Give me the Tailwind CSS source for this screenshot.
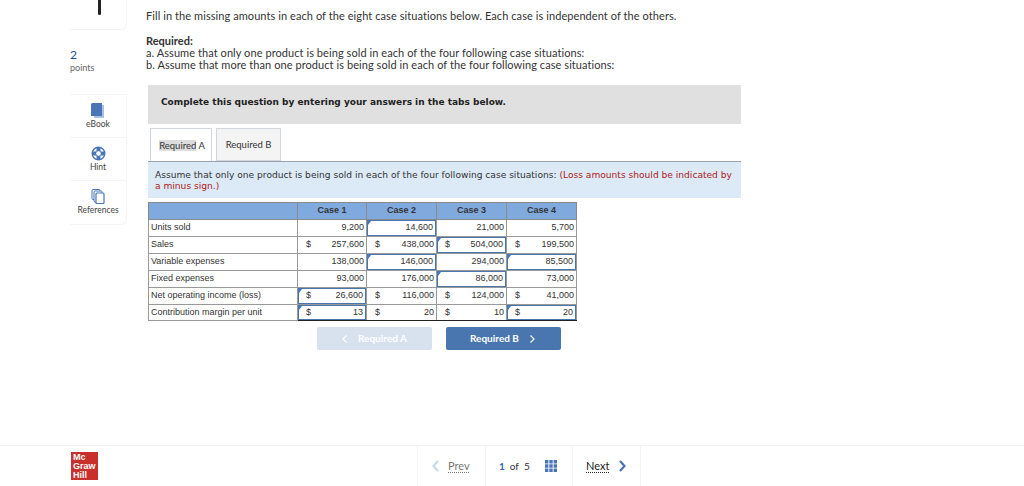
<!DOCTYPE html>
<html lang="en">
<head>
  <meta charset="UTF-8" />
  <title>Question 1 of 5</title>
  <script src="https://cdn.jsdelivr.net/npm/@tailwindcss/browser@4"></script>
</head>
<body class="bg-white overflow-hidden font-['Lato',sans-serif] text-[#333]">
<div class="flex flex-col w-[1024px] h-[486px]">

  <div class="flex h-[445px]">
    <!-- sidebar -->
    <div class="w-[146px] shrink-0 pl-[70px]">
      <div class="w-[57px] h-[30px] border-r border-b border-gray-100 rounded-br-md flex justify-center pl-[2px]">
        <div class="w-[3px] h-[15px] bg-[#222] rounded-b-sm"></div>
      </div>
      <div class="mt-[18px] text-[12px] leading-[14px] text-[#1f4a8c]">2</div>
      <div class="text-[9px] leading-[12px] text-[#666]">points</div>
      <div class="mt-[20px] w-[57px] border-t border-r border-b border-gray-100 rounded-br-md text-[8.5px] text-center text-[#444]">
        <div class="h-[43px] border-b border-gray-100 flex flex-col items-center pt-[8px]">
          <svg class="w-[14px] h-[15px]" viewBox="0 0 14 15"><path d="M3 2h10v13H3z" fill="#a9c0e0"/><path d="M0 1.500A1.500 1.500 0 0 1 1.500 0H11v13H0z" fill="#4a76b8"/></svg>
          <span class="leading-[11px] mt-[1px]">eBook</span>
        </div>
        <div class="h-[43px] border-b border-gray-100 flex flex-col items-center pt-[8px]">
          <svg class="w-[15px] h-[15px]" viewBox="0 0 15 15" fill="none" stroke="#4a76b8"><circle cx="7.500" cy="7.500" r="6.300" stroke-width="1.400"/><circle cx="7.500" cy="7.500" r="2.800" stroke-width="1"/><path d="M5.500 1.500h4v3.500h-4zM5.500 10h4v3.500h-4zM1.500 5.500H5v4H1.500zM10 5.500h3.500v4H10z" fill="#4a76b8" stroke="none"/></svg>
          <span class="leading-[11px] mt-[1px]">Hint</span>
        </div>
        <div class="h-[43px] flex flex-col items-center pt-[8px]">
          <svg class="w-[14px] h-[15px]" viewBox="0 0 14 15" fill="#fff" stroke="#4a76b8"><rect x="1" y="0.500" width="8" height="10" rx="1"/><rect x="3" y="2" width="8" height="11" rx="1"/><rect x="5" y="4" width="8" height="10.500" rx="1" stroke-width="1.200"/></svg>
          <span class="leading-[11px] mt-[1px]">References</span>
        </div>
      </div>
    </div>

    <!-- question -->
    <div class="flex-1 pt-[9px]">
      <p class="text-[11px] leading-[14px] tracking-[0.075px]">Fill in the missing amounts in each of the eight case situations below. Each case is independent of the others.</p>
      <p class="mt-[12px] text-[11px] leading-[12px] font-bold">Required:</p>
      <p class="text-[11px] leading-[12px] tracking-[0.07px]">a. Assume that only one product is being sold in each of the four following case situations:</p>
      <p class="text-[11px] leading-[12px] tracking-[0.07px]">b. Assume that more than one product is being sold in each of the four following case situations:</p>

      <div class="ml-[2px] mt-[14px] w-[593px] h-[39px] bg-[#e0e0e0] pl-[13px] pb-[4px] flex items-center font-['DejaVu_Sans',sans-serif] font-bold text-[9px] text-[#222]">Complete this question by entering your answers in the tabs below.</div>

      <div class="ml-[2px] mt-[4px] w-[593px]">
        <div class="flex gap-[4px] pl-[2px] h-[33px] text-[9.500px] items-stretch">
          <div class="w-[62px] border border-b-0 border-gray-300 bg-white flex items-center justify-center pl-[2px] pt-[2px]"><span><span class="bg-[#ddd]">Required</span> A</span></div>
          <div class="w-[65px] border border-gray-300 bg-[#f4f4f4] flex items-center justify-center pt-[2px]">Required B</div>
        </div>
        <div class="h-[37px] border-t border-gray-400 bg-[#dce9f7] pl-[7px] pr-[4px] pt-[8px] font-['DejaVu_Sans',sans-serif] text-[9.1px] leading-[11px] text-[#333]">
          Assume that only one product is being sold in each of the four following case situations: <span class="text-[#b02020]">(Loss amounts should be indicated by a minus sign.)</span>
        </div>

        <table class="mt-[4px] table-fixed border-collapse w-[428px] font-['Liberation_Sans',sans-serif] text-[9px] text-[#333]">
          <colgroup><col class="w-[149px]"><col class="w-[69px]"><col class="w-[70px]"><col class="w-[70px]"><col class="w-[70px]"></colgroup>
          <thead>
            <tr class="h-[17px] bg-[#80a9de] font-bold">
              <th class="border border-[#8a8a8a]"></th>
              <th class="border border-[#8a8a8a]">Case 1</th>
              <th class="border border-[#8a8a8a]">Case 2</th>
              <th class="border border-[#8a8a8a]">Case 3</th>
              <th class="border border-[#8a8a8a]">Case 4</th>
            </tr>
          </thead>
          <tbody>
            <tr class="h-[17px]">
              <td class="border border-[#999] pl-[2px]">Units sold</td>
              <td class="border border-[#999] p-0"><div class="h-[16px] flex items-center justify-end pr-[2px]">9,200</div></td>
              <td class="border border-[#999] p-0"><div class="relative h-[16px] border border-[#4a76b0] flex items-center justify-end pr-[2px]"><i class="absolute left-0 top-0 border-t-[4px] border-r-[3px] border-t-[#3f78c0] border-r-transparent"></i>14,600</div></td>
              <td class="border border-[#999] p-0"><div class="h-[16px] flex items-center justify-end pr-[2px]">21,000</div></td>
              <td class="border border-[#999] p-0"><div class="h-[16px] flex items-center justify-end pr-[2px]">5,700</div></td>
            </tr>
            <tr class="h-[17px]">
              <td class="border border-[#999] pl-[2px]">Sales</td>
              <td class="border border-[#999] border-t-[#222] p-0"><div class="h-[16px] flex items-center justify-between pl-[8px] pr-[2px]"><span>$</span><span>257,600</span></div></td>
              <td class="border border-[#999] border-t-[#222] p-0"><div class="h-[16px] flex items-center justify-between pl-[8px] pr-[2px]"><span>$</span><span>438,000</span></div></td>
              <td class="border border-[#999] border-t-[#222] p-0"><div class="relative h-[16px] border border-[#4a76b0] flex items-center justify-between pl-[7px] pr-[2px]"><i class="absolute left-0 top-0 border-t-[4px] border-r-[3px] border-t-[#3f78c0] border-r-transparent"></i><span>$</span><span>504,000</span></div></td>
              <td class="border border-[#999] border-t-[#222] p-0"><div class="h-[16px] flex items-center justify-between pl-[8px] pr-[2px]"><span>$</span><span>199,500</span></div></td>
            </tr>
            <tr class="h-[17px]">
              <td class="border border-[#999] pl-[2px]">Variable expenses</td>
              <td class="border border-[#999] p-0"><div class="h-[16px] flex items-center justify-end pr-[2px]">138,000</div></td>
              <td class="border border-[#999] p-0"><div class="relative h-[16px] border border-[#4a76b0] flex items-center justify-end pr-[2px]"><i class="absolute left-0 top-0 border-t-[4px] border-r-[3px] border-t-[#3f78c0] border-r-transparent"></i>146,000</div></td>
              <td class="border border-[#999] p-0"><div class="h-[16px] flex items-center justify-end pr-[2px]">294,000</div></td>
              <td class="border border-[#999] p-0"><div class="relative h-[16px] border border-[#4a76b0] flex items-center justify-end pr-[2px]"><i class="absolute left-0 top-0 border-t-[4px] border-r-[3px] border-t-[#3f78c0] border-r-transparent"></i>85,500</div></td>
            </tr>
            <tr class="h-[17px]">
              <td class="border border-[#999] pl-[2px]">Fixed expenses</td>
              <td class="border border-[#999] p-0"><div class="h-[16px] flex items-center justify-end pr-[2px]">93,000</div></td>
              <td class="border border-[#999] p-0"><div class="h-[16px] flex items-center justify-end pr-[2px]">176,000</div></td>
              <td class="border border-[#999] p-0"><div class="relative h-[16px] border border-[#4a76b0] flex items-center justify-end pr-[2px]"><i class="absolute left-0 top-0 border-t-[4px] border-r-[3px] border-t-[#3f78c0] border-r-transparent"></i>86,000</div></td>
              <td class="border border-[#999] p-0"><div class="h-[16px] flex items-center justify-end pr-[2px]">73,000</div></td>
            </tr>
            <tr class="h-[17px]">
              <td class="border border-[#999] pl-[2px]">Net operating income (loss)</td>
              <td class="border border-[#999] border-t-[#222] p-0"><div class="relative h-[16px] border border-[#4a76b0] flex items-center justify-between pl-[7px] pr-[2px]"><i class="absolute left-0 top-0 border-t-[4px] border-r-[3px] border-t-[#3f78c0] border-r-transparent"></i><span>$</span><span>26,600</span></div></td>
              <td class="border border-[#999] border-t-[#222] p-0"><div class="h-[16px] flex items-center justify-between pl-[8px] pr-[2px]"><span>$</span><span>116,000</span></div></td>
              <td class="border border-[#999] border-t-[#222] p-0"><div class="h-[16px] flex items-center justify-between pl-[8px] pr-[2px]"><span>$</span><span>124,000</span></div></td>
              <td class="border border-[#999] border-t-[#222] p-0"><div class="h-[16px] flex items-center justify-between pl-[8px] pr-[2px]"><span>$</span><span>41,000</span></div></td>
            </tr>
            <tr class="h-[16px]">
              <td class="border border-[#999] pl-[2px]">Contribution margin per unit</td>
              <td class="border border-[#999] border-b-[#222] p-0"><div class="relative h-[15px] border border-[#4a76b0] flex items-center justify-between pl-[7px] pr-[2px]"><i class="absolute left-0 top-0 border-t-[4px] border-r-[3px] border-t-[#3f78c0] border-r-transparent"></i><span>$</span><span>13</span></div></td>
              <td class="border border-[#999] border-b-[#222] p-0"><div class="h-[15px] flex items-center justify-between pl-[8px] pr-[2px]"><span>$</span><span>20</span></div></td>
              <td class="border border-[#999] border-b-[#222] p-0"><div class="h-[15px] flex items-center justify-between pl-[8px] pr-[2px]"><span>$</span><span>10</span></div></td>
              <td class="border border-[#999] border-b-[#222] p-0"><div class="relative h-[15px] border border-[#4a76b0] flex items-center justify-between pl-[7px] pr-[2px]"><i class="absolute left-0 top-0 border-t-[4px] border-r-[3px] border-t-[#3f78c0] border-r-transparent"></i><span>$</span><span>20</span></div></td>
            </tr>
          </tbody>
        </table>

        <div class="mt-[6px] ml-[169px] flex gap-[14px] text-[10px] font-bold text-white">
          <div class="w-[115px] h-[23px] rounded-[2px] bg-[#d8e2ef] flex items-center pl-[25px] gap-[11px]">
            <svg class="w-[5px] h-[8px]" viewBox="0 0 5 8" fill="none" stroke="#fff" stroke-width="1.200"><path d="M4.500.5 1 4l3.500 3.500"/></svg>
            <span>Required A</span>
          </div>
          <div class="w-[115px] h-[23px] rounded-[2px] bg-[#4a76b0] flex items-center pl-[24px] gap-[11px]">
            <span>Required B</span>
            <svg class="w-[5px] h-[8px]" viewBox="0 0 5 8" fill="none" stroke="#fff" stroke-width="1.200"><path d="M.5.5 4 4 .5 7.500"/></svg>
          </div>
        </div>
      </div>
    </div>
  </div>

  <!-- footer -->
  <div class="h-[41px] border-t border-gray-100 flex items-stretch">
    <div class="w-[417px] pl-[71px] pt-[6px]">
      <div class="w-[27px] h-[28px] bg-[#c9302c] text-white font-['Liberation_Sans',sans-serif] font-bold text-[9px] leading-[9px] pl-[2px] pt-[1px]">Mc<br>Graw<br>Hill</div>
    </div>
    <div class="w-[68px] border-l border-gray-100 flex items-center gap-[9px] pl-[14px] text-[11px] text-[#777]">
      <svg class="w-[7px] h-[12px]" viewBox="0 0 7 12" fill="none" stroke="#c9d8ec" stroke-width="2.200"><path d="M6 1 1.500 6 6 11"/></svg>
      <span class="underline decoration-dotted underline-offset-2">Prev</span>
    </div>
    <div class="w-[88px] border-x border-gray-100 flex items-center pl-[13px] text-[10px]">
      <span class="text-[#2f66ad] font-bold">1</span><span class="ml-[5px]">of</span><span class="ml-[5px]">5</span>
      <svg class="ml-[15px] w-[12px] h-[12px]" viewBox="0 0 12 12" fill="#4a76b8"><path d="M0 0h3.400v3.400H0zM4.300 0h3.400v3.400H4.300zM8.600 0H12v3.400H8.600zM0 4.300h3.400v3.400H0zM4.300 4.300h3.400v3.400H4.300zM8.600 4.300H12v3.400H8.600zM0 8.600h3.400V12H0zM4.300 8.600h3.400V12H4.300zM8.600 8.600H12V12H8.600z"/></svg>
    </div>
    <div class="w-[68px] border-r border-gray-100 flex items-center pl-[13px] gap-[10px] text-[11px] text-[#222]">
      <span class="underline decoration-dotted underline-offset-2">Next</span>
      <svg class="w-[7px] h-[12px]" viewBox="0 0 7 12" fill="none" stroke="#4a76b8" stroke-width="2.200"><path d="M1 1 5.500 6 1 11"/></svg>
    </div>
  </div>

</div>
</body>
</html>
